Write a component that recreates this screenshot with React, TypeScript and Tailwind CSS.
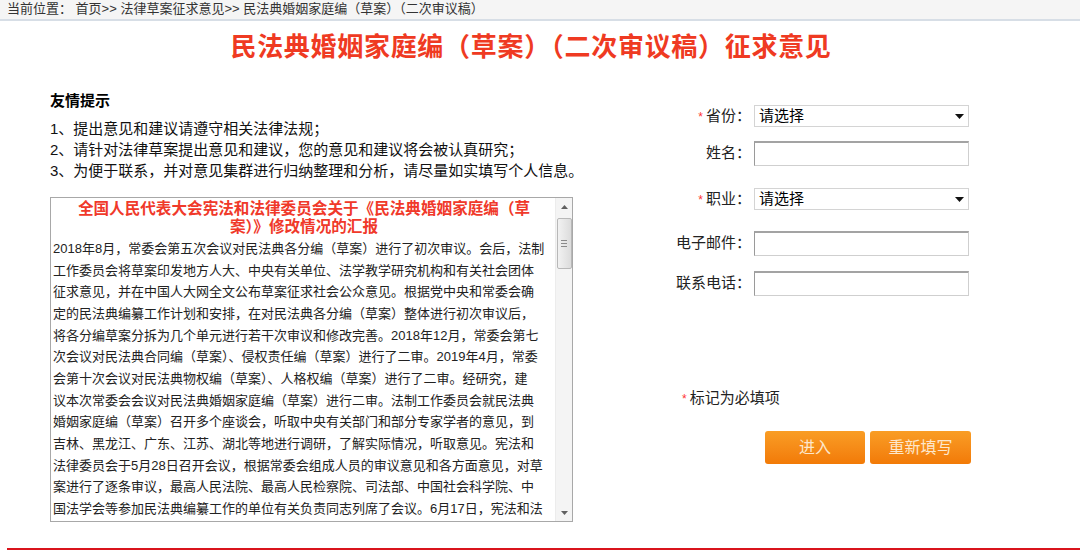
import React from 'react';

const bodyLines = [
  '2018年8月，常委会第五次会议对民法典各分编（草案）进行了初次审议。会后，法制',
  '工作委员会将草案印发地方人大、中央有关单位、法学教学研究机构和有关社会团体',
  '征求意见，并在中国人大网全文公布草案征求社会公众意见。根据党中央和常委会确',
  '定的民法典编纂工作计划和安排，在对民法典各分编（草案）整体进行初次审议后，',
  '将各分编草案分拆为几个单元进行若干次审议和修改完善。2018年12月，常委会第七',
  '次会议对民法典合同编（草案）、侵权责任编（草案）进行了二审。2019年4月，常委',
  '会第十次会议对民法典物权编（草案）、人格权编（草案）进行了二审。经研究，建',
  '议本次常委会会议对民法典婚姻家庭编（草案）进行二审。法制工作委员会就民法典',
  '婚姻家庭编（草案）召开多个座谈会，听取中央有关部门和部分专家学者的意见，到',
  '吉林、黑龙江、广东、江苏、湖北等地进行调研，了解实际情况，听取意见。宪法和',
  '法律委员会于5月28日召开会议，根据常委会组成人员的审议意见和各方面意见，对草',
  '案进行了逐条审议，最高人民法院、最高人民检察院、司法部、中国社会科学院、中',
  '国法学会等参加民法典编纂工作的单位有关负责同志列席了会议。6月17日，宪法和法',
];

const tips = [
  '1、提出意见和建议请遵守相关法律法规；',
  '2、请针对法律草案提出意见和建议，您的意见和建议将会被认真研究；',
  '3、为便于联系，并对意见集群进行归纳整理和分析，请尽量如实填写个人信息。',
];

const Star = () => <span className="mr-[3px] text-[12px] text-[#f33]">*</span>;

const SelectBox = () => (
  <div className="flex h-[22px] w-[215px] items-center justify-between border border-[#d4d4d4] bg-white pl-[4px] pr-[4px] text-[15px] text-black">
    <span>请选择</span>
    <svg width="9" height="5" viewBox="0 0 9 5">
      <path d="M0 0h9L4.5 5z" fill="#111" />
    </svg>
  </div>
);

const TextBox = () => (
  <div className="h-[25px] w-[215px] border border-[#cfcfcf] border-l-[#9a9a9a] border-t-2 border-t-[#a3a3a3] bg-white" />
);

const FormRow = ({
  label,
  required,
  children,
  className = '',
}: {
  label: string;
  required?: boolean;
  children: React.ReactNode;
  className?: string;
}) => (
  <div className={`flex items-center ${className}`}>
    <div className="w-[90px] text-right text-[15px] text-[#222]">
      {required && <Star />}
      {label}
    </div>
    <div className="ml-[3px]">{children}</div>
  </div>
);

export default function App() {
  return (
    <div className="h-[552px] w-[1080px] overflow-hidden bg-white font-['Liberation_Sans','Noto_Sans_CJK_SC',sans-serif] text-[#222]">
      {/* breadcrumb */}
      <div className="h-[21px] border-b-2 border-[#d7dee6] bg-[#f5f5f5] pl-[7px] text-[13px] leading-[18px] text-[#333]">
        当前位置： 首页&gt;&gt; 法律草案征求意见&gt;&gt; 民法典婚姻家庭编（草案）（二次审议稿）
      </div>

      {/* title */}
      <h1 className="mr-[18px] mt-[8px] text-center text-[26px] font-bold leading-[36px] tracking-[0.7px] text-[#ef3a22]">
        民法典婚姻家庭编（草案）（二次审议稿）征求意见
      </h1>

      <div className="flex items-start">
        {/* left column */}
        <div className="ml-[50px] w-[523px]">
          <div className="mt-[25px] text-[15px] font-bold leading-[21px] text-black">友情提示</div>
          <div className="mt-[7px] text-[15px] leading-[21px] text-[#111]">
            {tips.map((t) => (
              <div key={t} className="whitespace-nowrap">
                {t}
              </div>
            ))}
          </div>

          <div className="mt-[16px] flex h-[325px] border border-[#a8a8a8] bg-white">
            <div className="flex-1 overflow-hidden pl-[2px]">
              <div className="pt-[2px] text-center text-[15.6px] font-bold leading-[18px] text-[#f0392a]">
                <div className="whitespace-nowrap">全国人民代表大会宪法和法律委员会关于《民法典婚姻家庭编（草</div>
                <div className="whitespace-nowrap">案）》修改情况的汇报</div>
              </div>
              <div className="mt-[2px] text-[13px] leading-[21.67px] text-[#222]">
                {bodyLines.map((l, i) => (
                  <div key={i} className="whitespace-nowrap">
                    {l}
                  </div>
                ))}
              </div>
            </div>

            {/* scrollbar */}
            <div className="flex w-[17px] flex-col border-l border-[#ececec] bg-[#f4f4f4]">
              <div className="flex h-[17px] items-center justify-center">
                <svg width="7" height="4" viewBox="0 0 7 4">
                  <path d="M0 4h7L3.5 0z" fill="#606060" />
                </svg>
              </div>
              <div className="mx-auto mt-[3px] flex h-[51px] w-[15px] flex-col items-center justify-center gap-[2px] rounded-[2px] border border-[#b8b8b8] bg-gradient-to-r from-[#f2f2f2] to-[#dcdcdc]">
                <div className="h-px w-[6px] bg-[#8a8a8a]" />
                <div className="h-px w-[6px] bg-[#8a8a8a]" />
                <div className="h-px w-[6px] bg-[#8a8a8a]" />
              </div>
              <div className="flex-1" />
              <div className="flex h-[17px] items-center justify-center">
                <svg width="7" height="4" viewBox="0 0 7 4">
                  <path d="M0 0h7L3.5 4z" fill="#606060" />
                </svg>
              </div>
            </div>
          </div>
        </div>

        {/* right column: form */}
        <div className="ml-[88px] flex w-[320px] flex-col">
          <FormRow label="省份：" required className="mt-[40px] h-[22px]">
            <SelectBox />
          </FormRow>
          <FormRow label="姓名：" className="mt-[14px] h-[25px]">
            <TextBox />
          </FormRow>
          <FormRow label="职业：" required className="mt-[22px] h-[22px]">
            <SelectBox />
          </FormRow>
          <FormRow label="电子邮件：" className="mt-[21px] h-[25px]">
            <TextBox />
          </FormRow>
          <FormRow label="联系电话：" className="mt-[15px] h-[25px]">
            <TextBox />
          </FormRow>

          <div className="ml-[21px] mt-[92px] text-[15px] leading-[20px] text-[#222]">
            <Star />
            标记为必填项
          </div>

          <div className="ml-[104px] mt-[22px] flex gap-[5px]">
            <button
              type="button"
              className="h-[33px] w-[100px] rounded-[3px] bg-gradient-to-b from-[#f99d24] to-[#f27a06] text-[16px] text-[#fde7cc]"
            >
              进入
            </button>
            <button
              type="button"
              className="h-[33px] w-[101px] rounded-[3px] bg-gradient-to-b from-[#f99d24] to-[#f27a06] text-[16px] text-[#fde7cc]"
            >
              重新填写
            </button>
          </div>
        </div>
      </div>

      {/* bottom rule */}
      <div className="ml-[7px] mt-[26px] h-[2px] bg-[#d9141c]" />
    </div>
  );
}
